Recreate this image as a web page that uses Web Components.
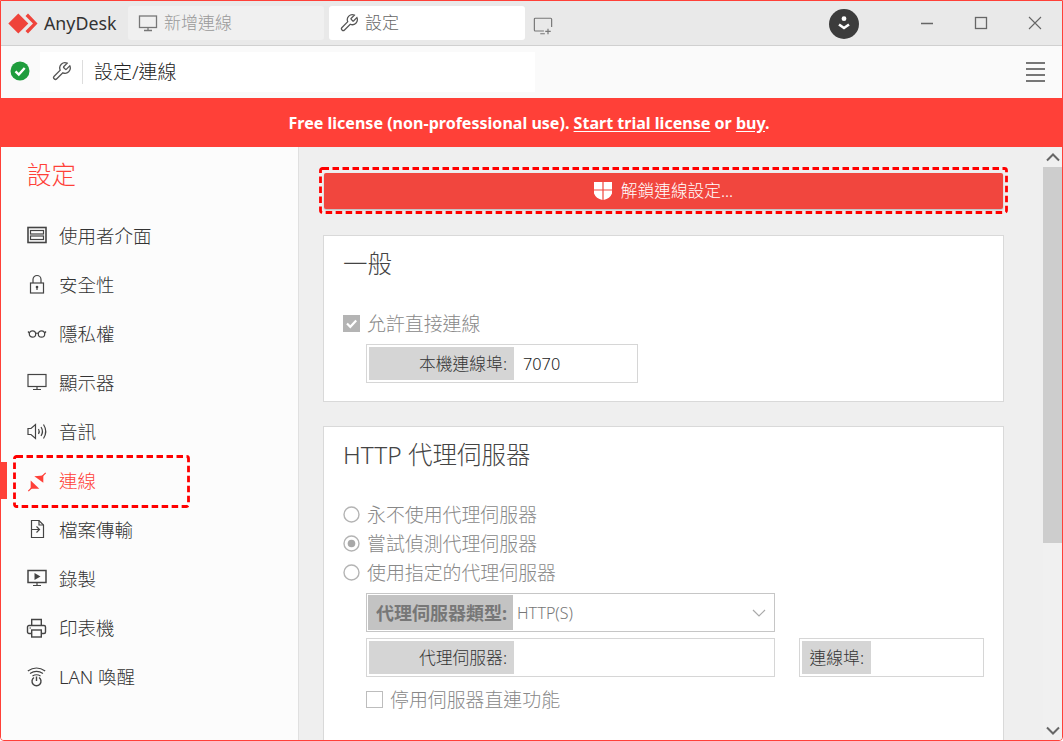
<!DOCTYPE html>
<html lang="zh-Hant">
<head>
<meta charset="utf-8">
<title>AnyDesk</title>
<style>
    html, body { margin: 0; height: 100%; background: #fff; }
    body { font-family: "Noto Sans", "Noto Sans CJK TC", sans-serif; color: #333; overflow: hidden; }
</style>
</head>
<body>
<app-window>
    <title-bar></title-bar>
    <address-bar path="設定/連線"></address-bar>
    <license-banner></license-banner>
    <div style="display:flex;flex:1;min-height:0">
        <settings-nav heading="設定">
            <nav-item icon="ui" label="使用者介面"></nav-item>
            <nav-item icon="lock" label="安全性"></nav-item>
            <nav-item icon="glasses" label="隱私權"></nav-item>
            <nav-item icon="monitor" label="顯示器"></nav-item>
            <nav-item icon="audio" label="音訊"></nav-item>
            <nav-item icon="plug" label="連線" active></nav-item>
            <nav-item icon="file" label="檔案傳輸"></nav-item>
            <nav-item icon="record" label="錄製"></nav-item>
            <nav-item icon="printer" label="印表機"></nav-item>
            <nav-item icon="wake" label="LAN 喚醒"></nav-item>
        </settings-nav>
        <settings-pane>
            <unlock-button>解鎖連線設定...</unlock-button>
            <settings-card heading="一般">
                <option-row type="check" checked>允許直接連線</option-row>
                <label-field label="本機連線埠:" value="7070" style="width:272px;margin:6px 0 0 23px"></label-field>
            </settings-card>
            <settings-card heading="HTTP 代理伺服器">
                <option-row type="radio">永不使用代理伺服器</option-row>
                <option-row type="radio" checked>嘗試偵測代理伺服器</option-row>
                <option-row type="radio">使用指定的代理伺服器</option-row>
                <label-field select label="代理伺服器類型:" value="HTTP(S)" style="width:409px;margin:6px 0 0 23px"></label-field>
                <div style="display:flex;gap:24px;margin:6px 0 0 23px">
                    <label-field label="代理伺服器:" style="width:409px"></label-field>
                    <label-field label="連線埠:" label-width="69" style="width:185px"></label-field>
                </div>
                <option-row type="check" style="margin:8px 0 28px 23px">停用伺服器直連功能</option-row>
            </settings-card>
        </settings-pane>
        <pane-scrollbar></pane-scrollbar>
    </div>
</app-window>

<script>
const wrench = 'M14.7 6.3a1 1 0 0 0 0 1.4l1.6 1.6a1 1 0 0 0 1.4 0l3.77-3.77a6 6 0 0 1-7.94 7.94l-6.91 6.91a2.12 2.12 0 0 1-3-3l6.91-6.91a6 6 0 0 1 7.94-7.94l-3.76 3.76z'

const navIcons = {
    ui: '<rect x="1" y="2.5" width="18" height="15" fill="none" stroke-width="1.6"/><rect x="3.5" y="5.5" width="13" height="3.5" fill="none"/><rect x="3.5" y="11" width="13" height="3.5" fill="none"/>',
    lock: '<rect x="3.5" y="9" width="13" height="10" fill="none"/><path d="M6 9V5.500a4 4 0 0 1 8 0V9" fill="none"/><circle cx="10" cy="13" r="1.3" fill="#444" stroke="none"/><path d="M10 13v3"/>',
    glasses: '<circle cx="5.500" cy="11" r="3.200" fill="none"/><circle cx="14.500" cy="11" r="3.200" fill="none"/><path d="M8.700 10.500q1.300-1 2.600 0M2.300 10 1 8.500M17.700 10 19 8.500" fill="none"/>',
    monitor: '<rect x="1" y="2.500" width="18" height="12" fill="none"/><path d="M10 14.500v3M6 17.500h8" fill="none"/>',
    audio: '<path d="M1 7.500v6h3l4.500 4V3.500L4 7.500z" fill="none"/><path d="M11.500 8q1.500 2.500 0 5M14 6q3 4.500 0 9M16.500 3.500q4.500 7 0 14" fill="none"/>',
    plug: '<path d="M15 6.500 18.700 2.800M5 17.500 1.300 21.200" stroke="#ff4038" fill="none"/><path d="M7.300 6.200 16.300 5.500V12.800z" fill="#ff4038" stroke="none"/><path d="M3.700 10.500V18.800H12.300z" fill="#ff4038" stroke="none"/>',
    file: '<path d="M4.500 1.500h7.500l4.500 4.500v12.500h-12z" fill="none"/><path d="M12 1.500v4.500h4.500M4.500 10.500h8M9.500 7.500l3 3-3 3" fill="none"/>',
    record: '<rect x="1" y="2.500" width="18" height="12" fill="none" stroke-width="1.500"/><path d="M7.500 5v7l6-3.500z" fill="#444" stroke="none"/><path d="M10 14.500v3M6 17.500h8" fill="none"/>',
    printer: '<path d="M4.700 8.500V2.500H14.300V8.500M4.700 16.500H2A1.500 1.500 0 0 1 .5 15V10A1.500 1.500 0 0 1 2 8.500H17A1.500 1.500 0 0 1 18.500 10V15A1.500 1.500 0 0 1 17 16.500H14.300" fill="none" stroke-width="1.400"/><rect x="4.700" y="13" width="9.600" height="7" fill="none" stroke-width="1.400"/><path d="M2.500 11h1.500"/>',
    wake: '<path d="M.8 5q8.700-6 17.400 0M3 7.500q6.500-4.200 13 0M5.500 10q4-2.500 8 0" fill="none"/><path d="M7 11.500a4.500 4.500 0 1 0 5 0M9.500 10.500v4.500" fill="none" stroke-width="1.400"/>'
}

class AppWindow extends HTMLElement {
    constructor() {
        super()
        this.attachShadow({ mode: 'open' })
        this.shadowRoot.innerHTML = `
            <style>
                :host {
                    display: flex;
                    flex-direction: column;
                    box-sizing: border-box;
                    height: 100vh;
                    border: 1px solid #ff4038;
                    border-radius: 0 0 4px 4px;
                    overflow: hidden;
                }
            </style>
            <slot></slot>
        `
    }
}

class TitleBar extends HTMLElement {
    constructor() {
        super()
        this.attachShadow({ mode: 'open' })
        this.shadowRoot.innerHTML = `
            <style>
                :host {
                    display: flex;
                    align-items: flex-start;
                    box-sizing: border-box;
                    height: 45px;
                    background: #e9e9e9;
                    border-bottom: 1px solid #d0d0d0;
                    padding-top: 5px;
                }
                .logo { display: flex; align-items: center; width: 127px; height: 35px; flex: none; }
                .logo svg { margin-left: 7px; flex: none; }
                .logo span { margin: 0 0 2px 6px; font-size: 17.8px; color: #333; }
                .tab {
                    display: flex;
                    align-items: center;
                    box-sizing: border-box;
                    width: 196px;
                    height: 34px;
                    border-radius: 3px;
                    padding-left: 10px;
                    font-size: 17px;
                    font-weight: 300;
                    margin-right: 5px;
                    flex: none;
                }
                .tab svg { margin-right: 6px; }
                .tab span { margin-bottom: 3px; }
                .idle { background: #f0f0f0; color: #999; }
                .current { background: #fff; color: #666; }
                .add { margin: 10px 0 0 3px; }
                .fill { flex: 1; }
                .download {
                    display: flex; align-items: center; justify-content: center;
                    width: 30px; height: 30px; margin: 3px 41px 0 0;
                    border-radius: 50%; background: #3c3c3c;
                }
                .win { display: flex; align-items: center; justify-content: center; width: 54px; height: 32px; margin-top: 1px; }
            </style>
            <div class="logo">
                <svg width="30" height="22" viewBox="0 0 30 22">
                    <path d="M.3 10.500 10.300 .5 20.300 10.500 10.300 20.500z" fill="#ef443b"/>
                    <path d="M17.500 3 20 .5 29.500 10.500 20 20.500 17.500 18 25 10.500z" fill="#ef443b"/>
                </svg>
                <span>AnyDesk</span>
            </div>
            <div class="tab idle">
                <svg width="20" height="20" viewBox="0 0 20 20" fill="none" stroke="#777" stroke-width="1.300"><rect x="1.500" y="3" width="17" height="11.500"/><path d="M10 14.500v3M6 17.500h8"/></svg>
                <span>新增連線</span>
            </div>
            <div class="tab current">
                <svg width="20" height="20" viewBox="0 0 24 24" fill="none" stroke="#555" stroke-width="1.500"><path d="${wrench}"/></svg>
                <span>設定</span>
            </div>
            <svg class="add" width="20" height="20" viewBox="0 0 22 22" fill="none" stroke="#777" stroke-width="1.300"><path d="M12 16.500H2.500a1 1 0 0 1-1-1V3.500a1 1 0 0 1 1-1h17a1 1 0 0 1 1 1V12M8 19.500h5M16.500 14v6M13.500 17h6"/></svg>
            <div class="fill"></div>
            <div class="download">
                <svg width="14" height="18" viewBox="0 0 14 18"><circle cx="7" cy="3.700" r="2.400" fill="#fff"/><path d="M2 9.500 7 13 12 9.500" fill="none" stroke="#fff" stroke-width="2.600"/></svg>
            </div>
            <div class="win"><svg width="14" height="14" viewBox="0 0 14 14"><path d="M1 7.500h12" stroke="#666" stroke-width="1.500"/></svg></div>
            <div class="win"><svg width="14" height="14" viewBox="0 0 14 14" fill="none"><rect x="1.500" y="1.500" width="11" height="11" stroke="#666" stroke-width="1.300"/></svg></div>
            <div class="win"><svg width="14" height="14" viewBox="0 0 14 14"><path d="M1 1 13 13M13 1 1 13" stroke="#666" stroke-width="1.100"/></svg></div>
        `
    }
}

class AddressBar extends HTMLElement {
    constructor() {
        super()
        this.attachShadow({ mode: 'open' })
        this.shadowRoot.innerHTML = `
            <style>
                :host {
                    display: flex;
                    align-items: center;
                    height: 52px;
                    background: #fafafa;
                }
                .status { margin: 0 0 2px 9px; flex: none; }
                .field {
                    display: flex;
                    align-items: center;
                    width: 495px;
                    height: 40px;
                    margin: 0 0 1px 10px;
                    background: #fff;
                }
                .field svg { margin-left: 11px; }
                .sep { width: 1px; height: 24px; background: #ddd; margin: 0 11px 0 10px; }
                .path { font-size: 19px; font-weight: 300; color: #222; margin-bottom: 1px; }
                .fill { flex: 1; }
                .menu { margin: 0 17px 1px 0; }
            </style>
            <svg class="status" width="20" height="20" viewBox="0 0 20 20">
                <circle cx="10" cy="10" r="9.500" fill="#1f9d3d"/>
                <path d="M5.500 10.300 8.800 13.500 14.700 7" fill="none" stroke="#fff" stroke-width="2.400"/>
            </svg>
            <div class="field">
                <svg width="21" height="21" viewBox="0 0 24 24" fill="none" stroke="#555" stroke-width="1.500"><path d="${wrench}"/></svg>
                <span class="sep"></span>
                <span class="path"></span>
            </div>
            <div class="fill"></div>
            <svg class="menu" width="19" height="20" viewBox="0 0 19 20" fill="#777"><rect y="0" width="19" height="2"/><rect y="6" width="19" height="2"/><rect y="12" width="19" height="2"/><rect y="18" width="19" height="2"/></svg>
        `
    }
    
    connectedCallback() {
        this.shadowRoot.querySelector('.path').textContent = this.getAttribute('path')
    }
}

class LicenseBanner extends HTMLElement {
    constructor() {
        super()
        this.attachShadow({ mode: 'open' })
        this.shadowRoot.innerHTML = `
            <style>
                :host {
                    display: flex;
                    align-items: center;
                    justify-content: center;
                    height: 49px;
                    flex: none;
                    padding-right: 5px;
                    background: #ff4038;
                    color: #fff;
                    font-size: 16.06px;
                    font-weight: 700;
                }
                u { text-underline-offset: 2px; }
            </style>
            <span>Free license (non-professional use). <u>Start trial license</u> or <u>buy</u>.</span>
        `
    }
}

class SettingsNav extends HTMLElement {
    constructor() {
        super()
        this.attachShadow({ mode: 'open' })
        this.shadowRoot.innerHTML = `
            <style>
                :host {
                    display: block;
                    box-sizing: border-box;
                    width: 298px;
                    flex: none;
                    background: #fcfcfc;
                    border-right: 1px solid #e0e0e0;
                }
                h1 {
                    margin: 0;
                    height: 63px;
                    padding: 10px 0 0 26px;
                    box-sizing: border-box;
                    font-size: 24.500px;
                    line-height: 36px;
                    font-weight: 300;
                    color: #ff4038;
                }
            </style>
            <h1></h1>
            <slot></slot>
        `
    }
    
    connectedCallback() {
        this.shadowRoot.querySelector('h1').textContent = this.getAttribute('heading')
    }
}

class NavItem extends HTMLElement {
    constructor() {
        super()
        this.attachShadow({ mode: 'open' })
        this.shadowRoot.innerHTML = `
            <style>
                :host {
                    display: flex;
                    align-items: center;
                    position: relative;
                    height: 49px;
                    padding-left: 26px;
                    font-size: 18.500px;
                    font-weight: 300;
                    color: #333;
                }
                .icon { width: 20px; height: 20px; flex: none; margin-right: 12px; overflow: visible; }
                :host([active]) { color: #ff4038; }
                :host([active])::before {
                    content: "";
                    position: absolute;
                    left: 0; top: 7px;
                    width: 6px; height: 37px;
                    background: #ff4038;
                }
                .dash { display: none; position: absolute; left: 12px; top: 0; }
                :host([active]) .dash { display: block; }
            </style>
            <svg class="icon" viewBox="0 0 20 20" stroke="#444" stroke-width="1.200"></svg>
            <span></span>
            <svg class="dash" width="177" height="53"><rect x="1.500" y="1.500" width="174" height="50" rx="2" fill="none" stroke="#f00" stroke-width="2.800" stroke-dasharray="6.500 3.500"/></svg>
        `
    }
    
    connectedCallback() {
        this.shadowRoot.querySelector('.icon').innerHTML = navIcons[this.getAttribute('icon')]
        this.shadowRoot.querySelector('span').textContent = this.getAttribute('label')
    }
}

class SettingsPane extends HTMLElement {
    constructor() {
        super()
        this.attachShadow({ mode: 'open' })
        this.shadowRoot.innerHTML = `
            <style>
                :host {
                    display: flex;
                    flex-direction: column;
                    flex: 1;
                    min-width: 0;
                    box-sizing: border-box;
                    padding: 26px 39px 0 24px;
                    background: #efefef;
                    overflow: hidden;
                }
                ::slotted(settings-card) { margin-top: 24px; }
                ::slotted(unlock-button) { margin: 0 1px 2px; }
            </style>
            <slot></slot>
        `
    }
}

class UnlockButton extends HTMLElement {
    constructor() {
        super()
        this.attachShadow({ mode: 'open' })
        this.shadowRoot.innerHTML = `
            <style>
                :host {
                    display: flex;
                    align-items: center;
                    justify-content: center;
                    position: relative;
                    flex: none;
                    height: 36px;
                    background: #f1463e;
                    border-radius: 2px;
                    box-shadow: 0 1px 2px rgba(0, 0, 0, .25);
                    color: #fff;
                    font-size: 16.700px;
                    font-weight: 300;
                }
                .shield { margin-right: 9px; }
                slot { display: block; margin-top: -2px; }
                .dash { position: absolute; left: -5px; top: -6px; }
            </style>
            <svg class="shield" width="18" height="18" viewBox="0 0 18 18">
                <path d="M0 0H8.400V7.400H0zM9.600 0H18V7.400H9.600zM0 8.600H8.400V18Q2 16.500 0 11.500zM9.600 8.600H18V11.500Q16 16.500 9.600 18z" fill="#fff"/>
            </svg>
            <slot></slot>
            <svg class="dash" width="689" height="47"><rect x="1.500" y="1.500" width="686" height="44" rx="2" fill="none" stroke="#f00" stroke-width="2.800" stroke-dasharray="6.500 3.500"/></svg>
        `
    }
}

class SettingsCard extends HTMLElement {
    constructor() {
        super()
        this.attachShadow({ mode: 'open' })
        this.shadowRoot.innerHTML = `
            <style>
                :host {
                    display: block;
                    flex: none;
                    background: #fff;
                    border: 1px solid #d9d9d9;
                    padding: 0 19px 18px;
                }
                h2 {
                    margin: 0 0 17px;
                    height: 56px;
                    line-height: 55px;
                    font-size: 24.500px;
                    font-weight: 300;
                    color: #444;
                }
            </style>
            <h2></h2>
            <slot></slot>
        `
    }
    
    connectedCallback() {
        this.shadowRoot.querySelector('h2').textContent = this.getAttribute('heading')
    }
}

class OptionRow extends HTMLElement {
    constructor() {
        super()
        this.attachShadow({ mode: 'open' })
        this.shadowRoot.innerHTML = `
            <style>
                :host {
                    display: flex;
                    align-items: center;
                    height: 29px;
                    font-size: 18.900px;
                    font-weight: 300;
                    color: #888;
                }
                svg { flex: none; margin-right: 7px; }
                slot { display: block; margin-top: -2px; }
            </style>
            <svg width="17" height="17" viewBox="0 0 17 17"></svg>
            <slot></slot>
        `
    }
    
    connectedCallback() {
        const checked = this.hasAttribute('checked')
        let mark
        if (this.getAttribute('type') === 'radio') {
            mark = '<circle cx="8.500" cy="8.500" r="7.500" fill="none" stroke="#b4b4b4" stroke-width="1.400"/>'
            if (checked) mark += '<circle cx="8.500" cy="8.500" r="3.800" fill="#a8a8a8"/>'
        } else if (checked) {
            mark = '<rect width="17" height="17" fill="#b4b4b4"/><path d="M4 8.500 7.300 11.800 13.200 5.500" fill="none" stroke="#fff" stroke-width="2.200"/>'
        } else {
            mark = '<rect x=".5" y=".5" width="16" height="16" fill="none" stroke="#bdbdbd"/>'
        }
        this.shadowRoot.querySelector('svg').innerHTML = mark
    }
}

class LabelField extends HTMLElement {
    constructor() {
        super()
        this.attachShadow({ mode: 'open' })
        this.shadowRoot.innerHTML = `
            <style>
                :host {
                    display: flex;
                    box-sizing: border-box;
                    height: 39px;
                    border: 1px solid #d6d6d6;
                    padding: 2px;
                    background: #fff;
                    flex: none;
                }
                .label {
                    box-sizing: border-box;
                    width: 145px;
                    flex: none;
                    display: flex;
                    align-items: center;
                    justify-content: flex-end;
                    padding: 0 7px 2px 0;
                    background: #d5d5d5;
                    color: #333;
                    font-size: 16.800px;
                    font-weight: 300;
                    white-space: nowrap;
                }
                .value { display: flex; align-items: center; flex: 1; padding-left: 9px; color: #222; font-size: 16.300px; font-weight: 300; }
                svg { display: none; margin: 0 7px 0 0; align-self: center; flex: none; }
                :host([select]) { padding: 1px; border-color: #c6c6c6; }
                :host([select]) .label { background: #c3c3c3; color: #777; font-size: 18px; font-weight: 700; padding-right: 6px; }
                :host([select]) .value { color: #777; padding-left: 4px; font-size: 16px; }
                :host([select]) svg { display: block; }
            </style>
            <span class="label"></span>
            <span class="value"></span>
            <svg width="14" height="8" viewBox="0 0 14 8"><path d="M1 1 7 7 13 1" fill="none" stroke="#aaa" stroke-width="1.200"/></svg>
        `
    }
    
    connectedCallback() {
        const label = this.shadowRoot.querySelector('.label')
        label.textContent = this.getAttribute('label')
        if (this.hasAttribute('label-width')) {
            label.style.width = this.getAttribute('label-width') + 'px'
        }
        this.shadowRoot.querySelector('.value').textContent = this.getAttribute('value') || ''
    }
}

class PaneScrollbar extends HTMLElement {
    constructor() {
        super()
        this.attachShadow({ mode: 'open' })
        this.shadowRoot.innerHTML = `
            <style>
                :host {
                    display: flex;
                    flex-direction: column;
                    width: 19px;
                    flex: none;
                    background: #f0f0f0;
                }
                .arrow { display: flex; align-items: center; justify-content: center; height: 20px; flex: none; }
                .thumb { height: 376px; background: #cdcdcd; flex: none; }
                .fill { flex: 1; }
            </style>
            <div class="arrow"><svg width="14" height="9" viewBox="0 0 14 9"><path d="M1 7.500 7 1.500 13 7.500" fill="none" stroke="#666" stroke-width="2"/></svg></div>
            <div class="thumb"></div>
            <div class="fill"></div>
            <div class="arrow"><svg width="14" height="9" viewBox="0 0 14 9"><path d="M1 1.500 7 7.500 13 1.500" fill="none" stroke="#666" stroke-width="2"/></svg></div>
        `
    }
}

customElements.define('app-window', AppWindow)
customElements.define('title-bar', TitleBar)
customElements.define('address-bar', AddressBar)
customElements.define('license-banner', LicenseBanner)
customElements.define('settings-nav', SettingsNav)
customElements.define('nav-item', NavItem)
customElements.define('settings-pane', SettingsPane)
customElements.define('unlock-button', UnlockButton)
customElements.define('settings-card', SettingsCard)
customElements.define('option-row', OptionRow)
customElements.define('label-field', LabelField)
customElements.define('pane-scrollbar', PaneScrollbar)
</script>
</body>
</html>
